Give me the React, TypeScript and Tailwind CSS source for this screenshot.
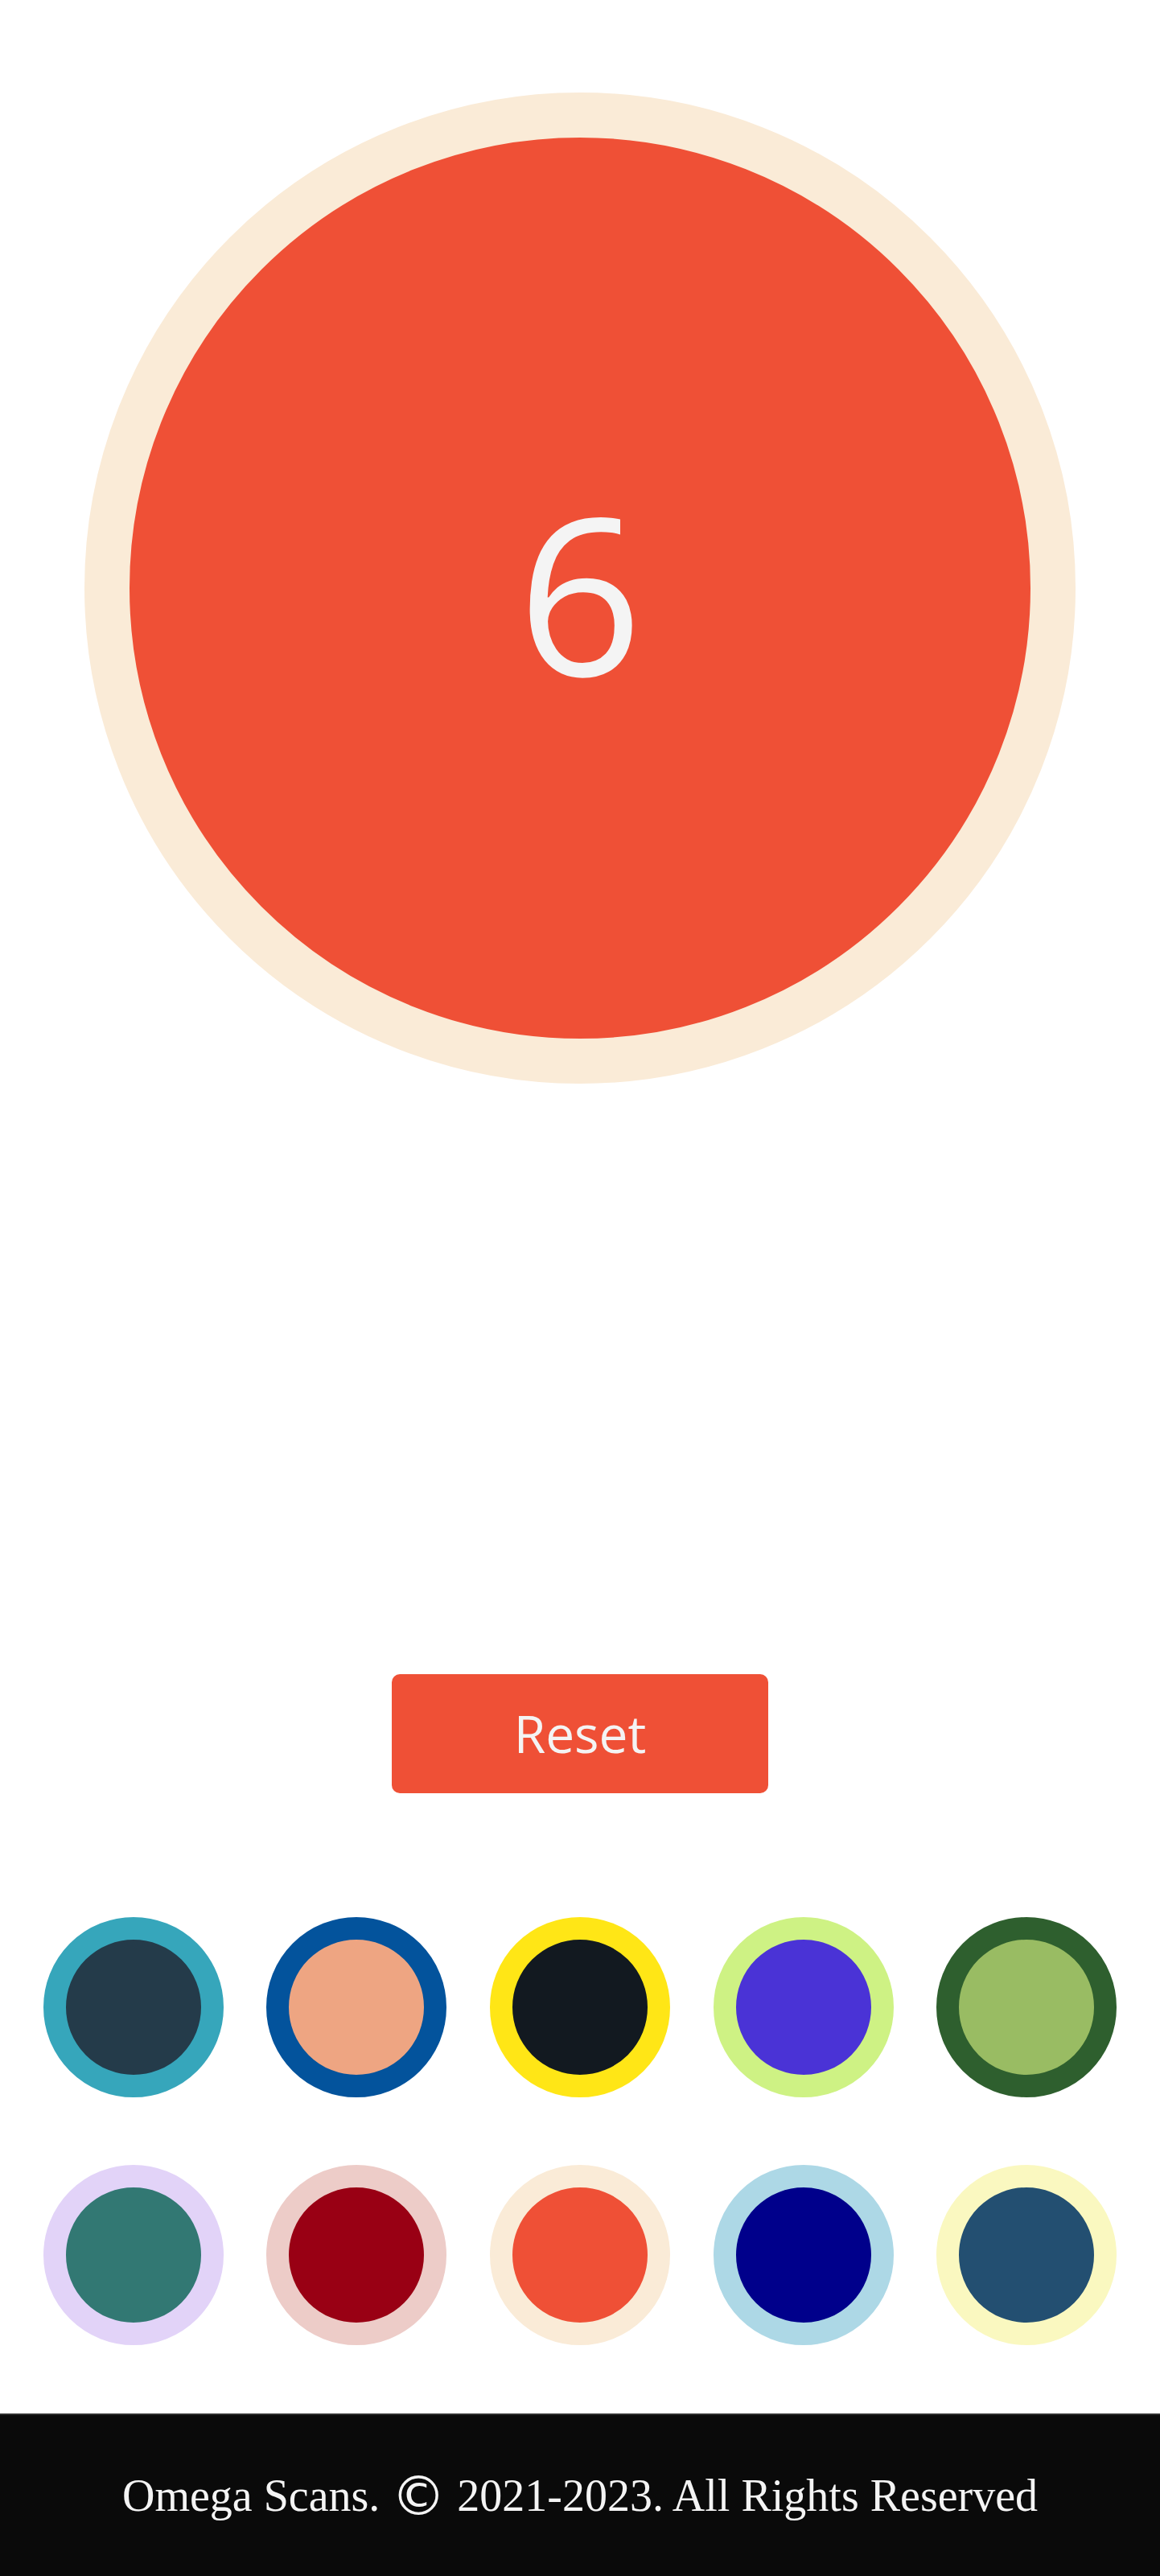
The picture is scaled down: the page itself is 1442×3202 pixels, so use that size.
import React, { useState } from "react";

type Swatch = { ring: string; fill: string };

const swatches: Swatch[] = [
  { ring: "border-[#36A6BB]", fill: "bg-[#243B4A]" },
  { ring: "border-[#03539C]", fill: "bg-[#EEA582]" },
  { ring: "border-[#FFE616]", fill: "bg-[#121920]" },
  { ring: "border-[#CEF284]", fill: "bg-[#4A33D6]" },
  { ring: "border-[#2E5F2E]", fill: "bg-[#99BC63]" },
  { ring: "border-[#E2D3F8]", fill: "bg-[#327873]" },
  { ring: "border-[#EDCCC8]", fill: "bg-[#990014]" },
  { ring: "border-[#FAEBD7]", fill: "bg-[#EF5036]" },
  { ring: "border-[#ADD8E6]", fill: "bg-[#00008B]" },
  { ring: "border-[#FAF8C0]", fill: "bg-[#234F71]" },
];

export default function App() {
  const [count, setCount] = useState(6);
  const [theme, setTheme] = useState<Swatch>(swatches[7]);

  return (
    <div className="min-h-[3202px] flex flex-col bg-white font-['Open_Sans',sans-serif]">
      <main className="flex-1 flex flex-col items-center pt-[115px]">
        <button
          onClick={() => setCount(count + 1)}
          className={`w-[1232px] h-[1232px] rounded-full border-[56px] flex items-center justify-center cursor-pointer ${theme.ring} ${theme.fill}`}
        >
          <span className="text-[272px] leading-none text-[#F4F4F4] font-normal translate-y-[4px]">
            {count}
          </span>
        </button>

        <button
          onClick={() => setCount(0)}
          className="mt-[734px] w-[468px] h-[148px] rounded-[10px] bg-[#EF5036] text-[#F4F4F4] text-[64px] leading-none flex items-center justify-center"
        >
          Reset
        </button>

        <div className="mt-[154px] mb-[85px] w-full grid grid-rows-2 gap-y-[84px]">
          {[0, 1].map((row) => (
            <div key={row} className="flex justify-evenly">
              {swatches.slice(row * 5, row * 5 + 5).map((s, i) => (
                <button
                  key={i}
                  onClick={() => setTheme(s)}
                  className={`w-[224px] h-[224px] rounded-full border-[28px] ${s.ring} ${s.fill}`}
                />
              ))}
            </div>
          ))}
        </div>
      </main>

      <footer className="h-[203px] bg-[#0A0A0A] border-t-[2px] border-[#2E2E2E] flex items-center justify-center">
        <p className="text-[56px] text-[#F4F4F4] leading-none font-['Liberation_Serif','Times_New_Roman',serif]">
          Omega Scans.{" "}
          <span className="text-[68px] align-[-5px] font-['DejaVu_Sans',sans-serif]">©</span>{" "}
          2021-2023. All Rights Reserved
        </p>
      </footer>
    </div>
  );
}
